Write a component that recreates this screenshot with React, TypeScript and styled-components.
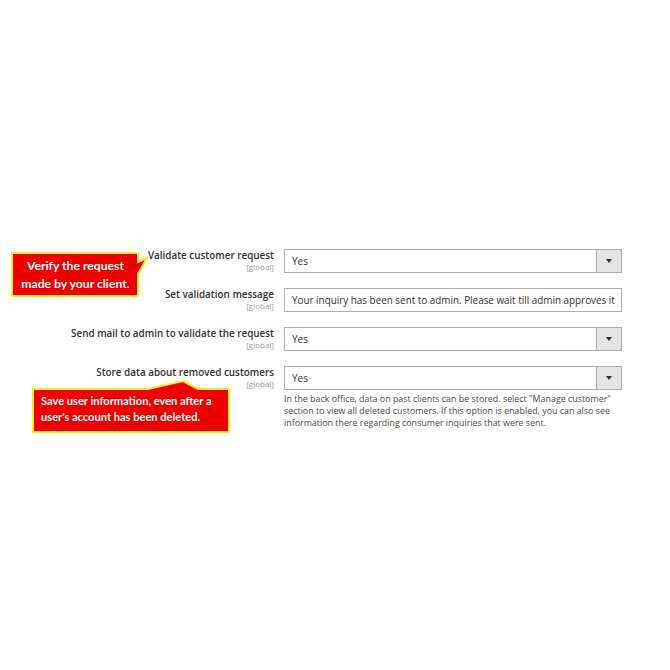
import React from "react";
import styled, { createGlobalStyle } from "styled-components";

const Global = createGlobalStyle`
  html, body { margin: 0; padding: 0; background: #ffffff; }
  body { font-family: "Open Sans", "Liberation Sans", sans-serif; }
`;

const Page = styled.div`
  position: relative;
  width: 670px;
  height: 670px;
  overflow: hidden;
  background: #fff;
`;

const Form = styled.div`
  padding-top: 249px;
  display: flex;
  flex-direction: column;
  gap: 15px;
`;

const Row = styled.div`
  display: grid;
  grid-template-columns: 274px 338px;
  column-gap: 10px;
  align-items: start;
`;

const LabelCell = styled.div`
  text-align: right;
  display: flex;
  flex-direction: column;
  align-items: flex-end;
`;

const LabelText = styled.span`
  font-size: 9.9px;
  font-weight: 600;
  color: #303030;
  line-height: 13px;
`;

const Scope = styled.span`
  font-size: 8px;
  color: #9a9a9a;
  line-height: 10px;
`;

const Control = styled.div`
  display: flex;
  flex-direction: column;
`;

const SelectBox = styled.div`
  height: 24px;
  box-sizing: border-box;
  border: 1px solid #adadad;
  display: flex;
  align-items: stretch;
  background: #fff;
`;

const SelectValue = styled.div`
  flex: 1;
  display: flex;
  align-items: center;
  padding-left: 7px;
  font-size: 10px;
  color: #303030;
`;

const Arrow = styled.div`
  width: 24px;
  background: #e3e3e3;
  border-left: 1px solid #adadad;
  display: flex;
  align-items: center;
  justify-content: center;
  &::after {
    content: "";
    border-left: 3px solid transparent;
    border-right: 3px solid transparent;
    border-top: 4px solid #333;
  }
`;

const TextInput = styled.div`
  height: 24px;
  box-sizing: border-box;
  border: 1px solid #adadad;
  display: flex;
  align-items: center;
  padding-left: 7px;
  font-size: 9.9px;
  color: #303030;
  white-space: nowrap;
  overflow: hidden;
`;

const Note = styled.div`
  margin-top: 3px;
  font-size: 8.9px;
  line-height: 12px;
  color: #4a4a4a;
  white-space: nowrap;
`;

const Callout = styled.div<{ $left: number; $top: number; $w: number; $h: number }>`
  position: absolute;
  left: ${(p) => p.$left}px;
  top: ${(p) => p.$top}px;
  width: ${(p) => p.$w}px;
  height: ${(p) => p.$h}px;
`;

const CalloutShape = styled.svg`
  position: absolute;
  left: 0;
  top: 0;
  overflow: visible;
`;

const CalloutText = styled.div<{ $pl: number; $pt: number; $align: string; $size: number; $lh: number }>`
  position: absolute;
  left: ${(p) => p.$pl}px;
  top: ${(p) => p.$pt}px;
  width: 100%;
  color: #fff;
  font-family: Lato, "Open Sans", sans-serif;
  font-weight: 700;
  font-size: ${(p) => p.$size}px;
  line-height: ${(p) => p.$lh}px;
  text-align: ${(p) => p.$align};
  white-space: nowrap;
`;

const Select = ({ value }: { value: string }) => (
  <SelectBox>
    <SelectValue>{value}</SelectValue>
    <Arrow />
  </SelectBox>
);

const Label = ({ text }: { text: string }) => (
  <LabelCell>
    <LabelText>{text}</LabelText>
    <Scope>[global]</Scope>
  </LabelCell>
);

export default function App() {
  return (
    <Page>
      <Global />
      <Form>
        <Row>
          <Label text="Validate customer request" />
          <Control>
            <Select value="Yes" />
          </Control>
        </Row>
        <Row>
          <Label text="Set validation message" />
          <Control>
            <TextInput>Your inquiry has been sent to admin. Please wait till admin approves it</TextInput>
          </Control>
        </Row>
        <Row>
          <Label text="Send mail to admin to validate the request" />
          <Control>
            <Select value="Yes" />
          </Control>
        </Row>
        <Row>
          <Label text="Store data about removed customers" />
          <Control>
            <Select value="Yes" />
            <Note>
              In the back office, data on past clients can be stored. select "Manage customer"
              <br />
              section to view all deleted customers. If this option is enabled, you can also see
              <br />
              information there regarding consumer inquiries that were sent.
            </Note>
          </Control>
        </Row>
      </Form>

      <Callout $left={12} $top={253} $w={128} $h={43}>
        <CalloutShape width="140" height="43">
          <polygon
            points="0,0 126,0 126,9 135,5 126,21 126,43 0,43"
            fill="#ee0000"
            stroke="#ffee22"
            strokeWidth="2"
            strokeLinejoin="miter"
          />
        </CalloutShape>
        <CalloutText $pl={0} $pt={4} $align="center" $size={12.2} $lh={18} style={{ width: 127 }}>
          Verify the request
          <br />
          made by your client.
        </CalloutText>
      </Callout>

      <Callout $left={33} $top={389} $w={196} $h={43}>
        <CalloutShape width="196" height="43">
          <polygon
            points="0,0 115,0 150,-8 165,0 196,0 196,43 0,43"
            fill="#ee0000"
            stroke="#ffee22"
            strokeWidth="2"
          />
        </CalloutShape>
        <CalloutText $pl={8} $pt={4} $align="left" $size={11.1} $lh={16}>
          Save user information, even after a
          <br />
          user's account has been deleted.
        </CalloutText>
      </Callout>
    </Page>
  );
}
